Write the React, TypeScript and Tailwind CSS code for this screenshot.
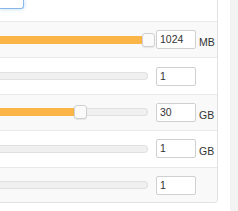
const rows = [
  { value: '1024', fill: 148, thumb: true, unit: 'MB', alt: true },
  { value: '1', fill: 0, thumb: false, unit: '', alt: false },
  { value: '30', fill: 80, thumb: true, unit: 'GB', alt: true },
  { value: '1', fill: 0, thumb: false, unit: 'GB', alt: false },
  { value: '1', fill: 0, thumb: false, unit: '', alt: true },
]

export default function App() {
  return (
    <div
      className="w-[238px] h-[211px] flex bg-white overflow-hidden text-[#333]"
      style={{ fontFamily: '"Liberation Sans", Arial, sans-serif' }}
    >
      {/* panel */}
      <div className="w-[218px] h-[203px] shrink-0 flex flex-col border-r border-b border-[#e2e2e2] rounded-br-[4px] overflow-hidden">
        <div className="h-[21px] shrink-0">
          <div className="w-[24px] h-[9px] border-r border-b border-[#86b7e8] rounded-br-[3px] shadow-[0_0_4px_rgba(102,175,233,0.45)]" />
        </div>
        {rows.map((r, i) => (
          <SliderRow key={i} {...r} />
        ))}
      </div>
      <div className="w-[12px] shrink-0" />
      <div className="flex-1 bg-[#f3f3f3]" />
    </div>
  )
}

function SliderRow({
  value,
  fill,
  thumb,
  unit,
  alt,
}: {
  value: string
  fill: number
  thumb: boolean
  unit: string
  alt: boolean
}) {
  return (
    <div
      className={[
        'h-[36.4px] shrink-0 flex items-center border-t border-[#e8e8e8]',
        alt ? 'bg-[#f9f9f9]' : 'bg-white',
      ].join(' ')}
    >
      <div className="relative w-[148px] h-[8px] shrink-0">
        <div className="absolute inset-0 rounded-r-[4px] border border-l-0 border-[#e0e0e0] bg-[#f0f0f0]" />
        {fill > 0 && (
          <div
            className="absolute left-0 top-0 h-[8px] bg-[#fbb446] rounded-r-[2px]"
            style={{ width: fill }}
          />
        )}
        {thumb && (
          <div
            className="absolute top-[-3px] h-[14px] w-[13px] rounded-[3px] border border-[#d0d0d0] bg-[#fafafa] shadow-[0_1px_1px_rgba(0,0,0,0.08)]"
            style={{ left: fill - 6 }}
          />
        )}
      </div>
      <div className="ml-[8px] w-[40px] h-[19px] shrink-0 border border-[#d0d0d0] rounded-[2px] bg-white text-[10.5px] leading-[16px] pl-[3px]">
        {value}
      </div>
      <div className="ml-[3px] pt-[5px] text-[10.5px] leading-none">{unit}</div>
    </div>
  )
}
